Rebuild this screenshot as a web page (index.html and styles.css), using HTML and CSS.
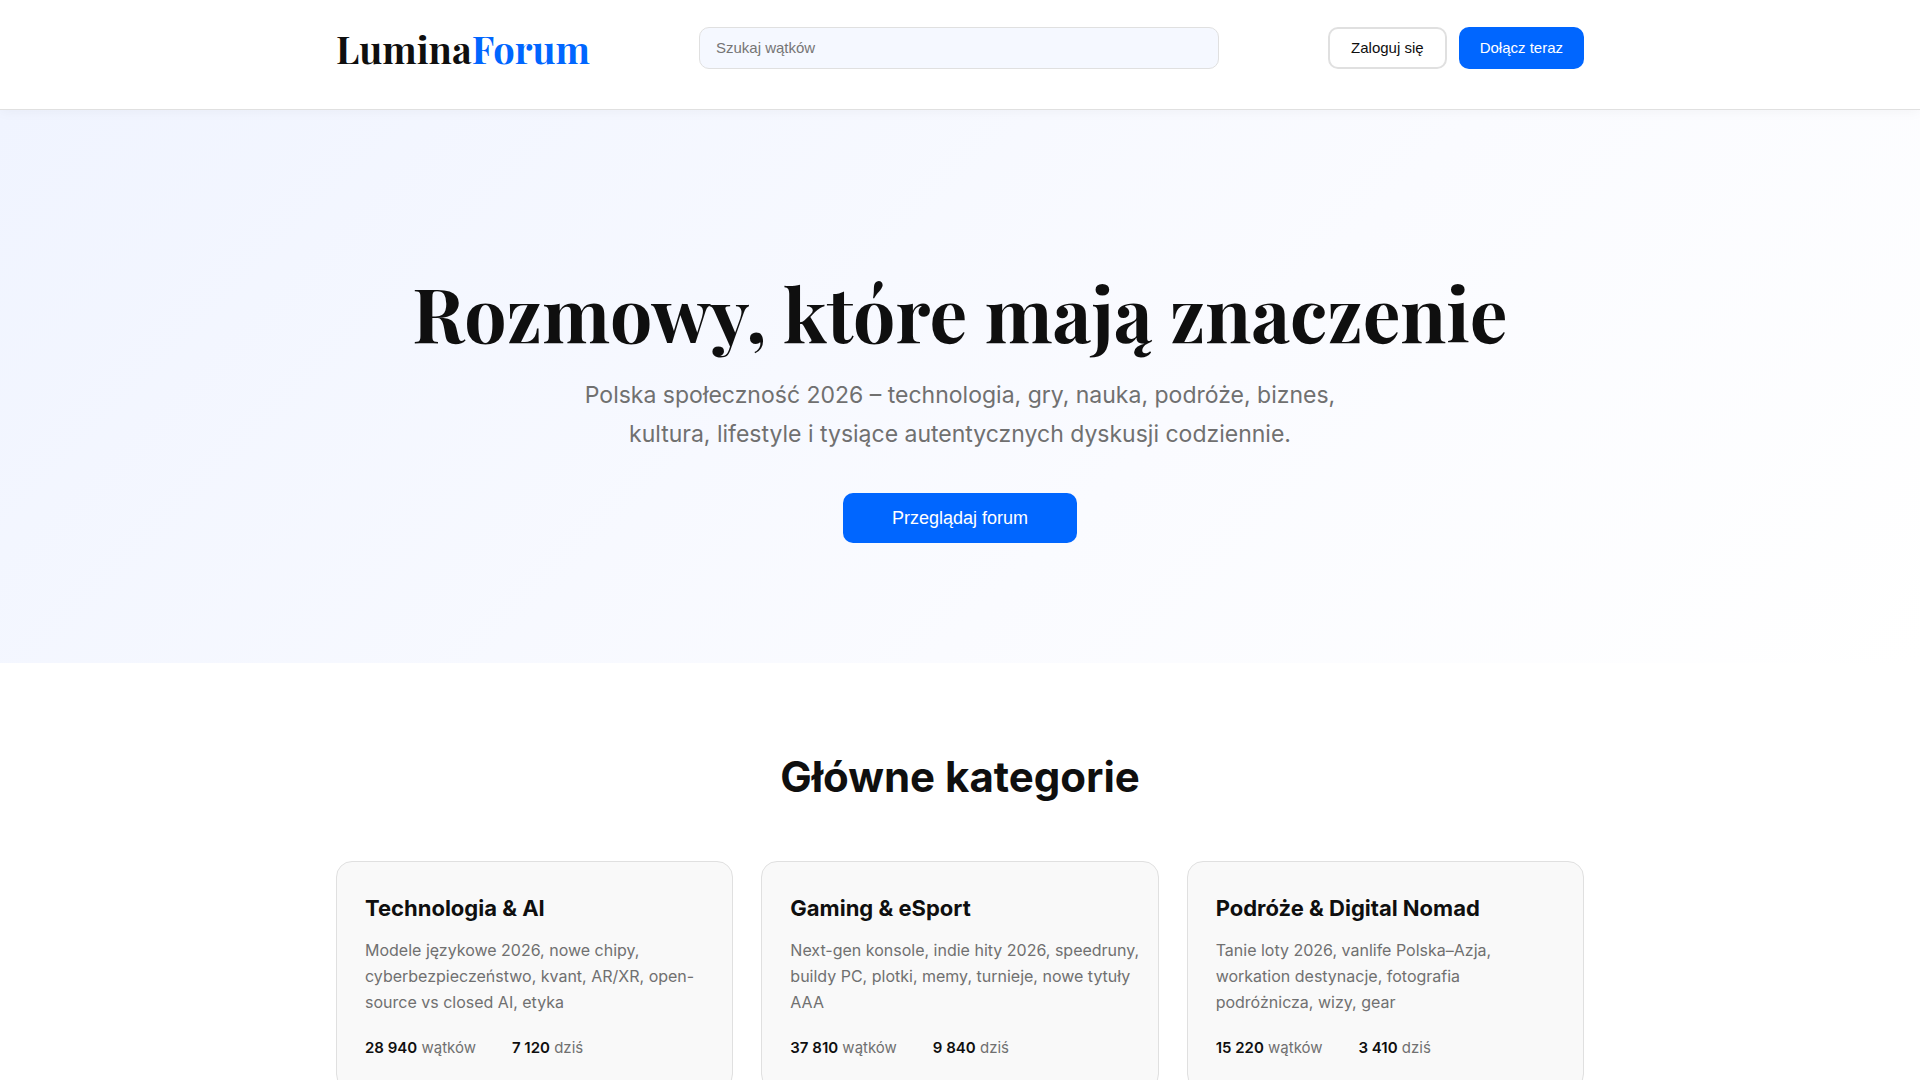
FILE: index.html
```html
<!DOCTYPE html>
<html lang="pl">
<head>
<meta charset="UTF-8">
<meta name="viewport" content="width=device-width, initial-scale=1">
<title>LuminaForum</title>
<link rel="stylesheet" href="styles.css">
</head>
<body>
<header class="site-header">
  <div class="container header-row">
    <a class="logo" href="#">Lumina<span class="logo-accent">Forum</span></a>
    <input class="search" type="search" placeholder="Szukaj wątków" aria-label="Szukaj wątków">
    <div class="actions">
      <button class="btn btn-outline" type="button">Zaloguj się</button>
      <button class="btn btn-primary" type="button">Dołącz teraz</button>
    </div>
  </div>
</header>
<main>
  <section class="hero">
    <div class="container">
      <h1 class="hero-title">Rozmowy, które mają znaczenie</h1>
      <p class="hero-text">Polska społeczność 2026 – technologia, gry, nauka, podróże, biznes, kultura, lifestyle i tysiące autentycznych dyskusji codziennie.</p>
      <button class="btn btn-primary btn-large" type="button">Przeglądaj forum</button>
    </div>
  </section>
  <section class="categories">
    <div class="container">
      <h2 class="section-title">Główne kategorie</h2>
      <div class="grid">
        <article class="card">
          <h3 class="card-title">Technologia &amp; AI</h3>
          <p class="card-text">Modele językowe 2026, nowe chipy, cyberbezpieczeństwo, kvant, AR/XR, open-source vs closed AI, etyka</p>
          <div class="stats"><span><strong>28 940</strong> wątków</span><span><strong>7 120</strong> dziś</span></div>
        </article>
        <article class="card">
          <h3 class="card-title">Gaming &amp; eSport</h3>
          <p class="card-text">Next-gen konsole, indie hity 2026, speedruny, buildy PC, plotki, memy, turnieje, nowe tytuły AAA</p>
          <div class="stats"><span><strong>37 810</strong> wątków</span><span><strong>9 840</strong> dziś</span></div>
        </article>
        <article class="card">
          <h3 class="card-title">Podróże &amp; Digital Nomad</h3>
          <p class="card-text">Tanie loty 2026, vanlife Polska–Azja,<br>workation destynacje, fotografia<br>podróżnicza, wizy, gear</p>
          <div class="stats"><span><strong>15 220</strong> wątków</span><span><strong>3 410</strong> dziś</span></div>
        </article>
      </div>
    </div>
  </section>
</main>
</body>
</html>
```

FILE: styles.css
```css
:root {
  --ink: #0f0f0f;
  --muted: #707070;
  --line: #e0e0e0;
  --blue: #0066ff;
  --tint: #f5f8ff;
}

* { box-sizing: border-box; margin: 0; padding: 0; }

body {
  font-family: Inter, sans-serif;
  font-size: 16px;
  line-height: 26px;
  color: var(--ink);
  background: #fff;
}

.container {
  max-width: 1296px;
  margin: 0 auto;
  padding: 0 24px;
}

.site-header {
  position: relative;
  background: #fff;
  border-bottom: 1px solid var(--line);
  box-shadow: 0 2px 12px rgba(0, 0, 0, 0.04);
}

.header-row {
  display: flex;
  justify-content: space-between;
  align-items: flex-start;
  padding-top: 16px;
  padding-bottom: 28px;
}

.logo {
  font-family: "Playfair Display", "Liberation Serif", serif;
  font-size: 38px;
  line-height: 65px;
  font-weight: 700;
  color: var(--ink);
  text-decoration: none;
}

.logo-accent { color: var(--blue); }

.search {
  width: 520px;
  height: 42px;
  margin-top: 11px;
  padding: 0 16px 2px;
  border: 1px solid var(--line);
  border-radius: 10px;
  background: var(--tint);
  font-family: "Liberation Sans", sans-serif;
  font-size: 15px;
}

.actions { display: flex; gap: 12px; margin-top: 11px; }

.btn {
  height: 42px;
  padding: 0 21px 2px;
  border: 0;
  border-radius: 10px;
  font-family: "Liberation Sans", sans-serif;
  font-size: 15px;
  cursor: pointer;
}

.btn-outline {
  border: 2px solid var(--line);
  background: #fff;
  color: var(--ink);
}

.btn-primary { background: var(--blue); color: #fff; }

.btn-large { height: 50px; padding: 0 49px; font-size: 18px; }

.hero {
  padding: 160px 0 120px;
  text-align: center;
  background: linear-gradient(135deg, #f0f4ff 0%, #fafbff 60%, #fff 100%);
}

.hero-title {
  margin-bottom: 22px;
  font-family: "Playfair Display", "Liberation Serif", serif;
  font-size: 75px;
  line-height: 84px;
  font-weight: 700;
}

.hero-text {
  max-width: 780px;
  margin: 0 auto 39px;
  font-size: 23px;
  line-height: 39px;
  color: var(--muted);
}

.categories { padding: 80px 0; }

.section-title {
  margin-bottom: 50px;
  font-size: 42px;
  line-height: 68px;
  font-weight: 700;
  text-align: center;
}

.grid {
  display: grid;
  grid-template-columns: repeat(3, 1fr);
  gap: 28px;
}

.card {
  padding: 28px 16px 28px 28px;
  border: 1px solid var(--line);
  border-radius: 16px;
  background: #f9f9f9;
}

.card-title {
  margin-bottom: 11px;
  font-size: 22px;
  line-height: 36px;
  font-weight: 700;
}

.card-text { margin-bottom: 20px; color: var(--muted); }

.stats {
  display: flex;
  gap: 36px;
  font-size: 15px;
  color: var(--muted);
}

.stats strong { font-weight: 600; color: var(--ink); }

@media (max-width: 1100px) {
  .header-row { flex-wrap: wrap; gap: 12px; }
  .search { width: 100%; order: 3; }
  .grid { grid-template-columns: 1fr; }
  .hero { padding: 80px 0; }
  .hero-title { font-size: 48px; line-height: 56px; }
}
```
